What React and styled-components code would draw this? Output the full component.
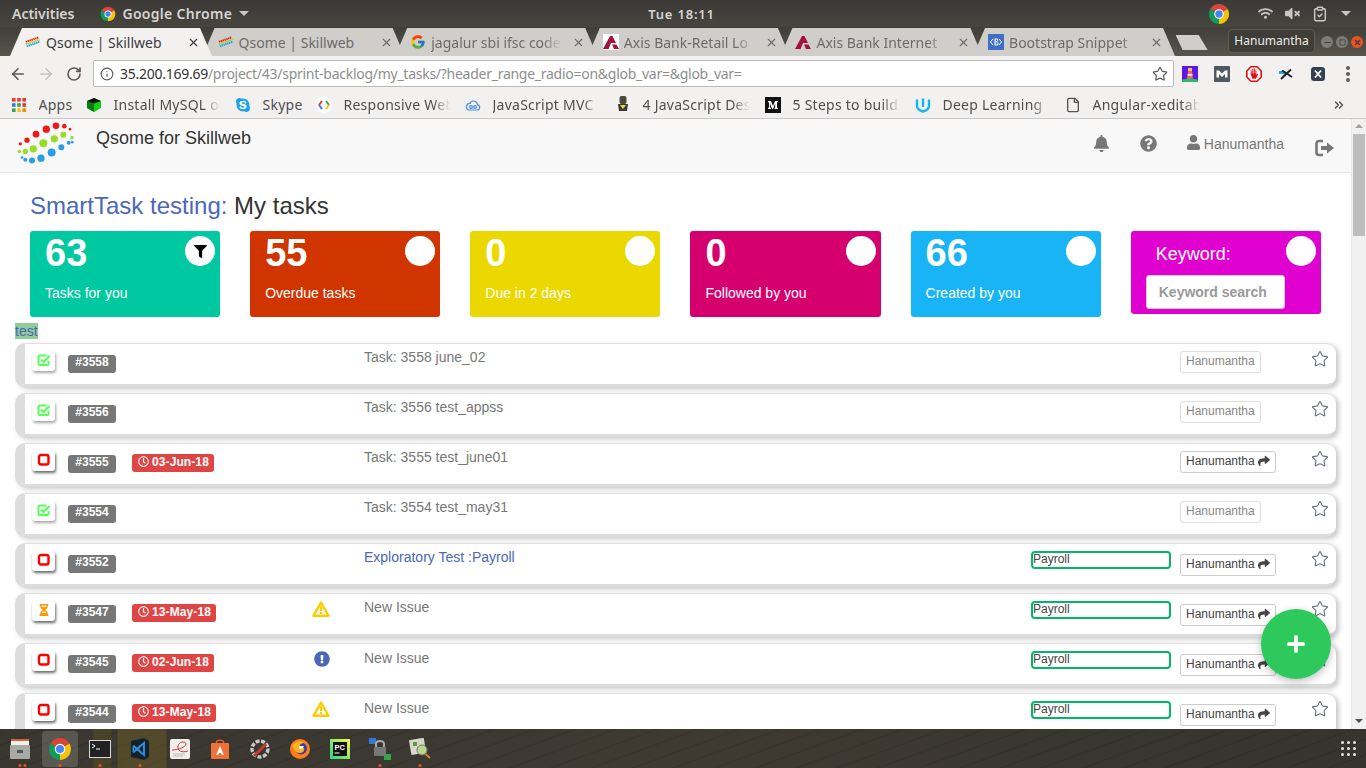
import React from 'react';
import styled, { createGlobalStyle } from 'styled-components';
import { ArrowLeft, ArrowRight, RotateCw, Info, Star, X, Minus, Square, ClipboardCheck, ChevronsRight, File } from 'lucide-react';
import { FaBell, FaQuestionCircle, FaUser, FaFilter, FaPlus, FaShare, FaRegClock, FaSkype, FaExclamationCircle, FaHourglassHalf, FaWifi, FaVolumeMute } from 'react-icons/fa';
import { FcGoogle } from 'react-icons/fc';

const UI = '"Noto Sans", "Open Sans", sans-serif';
const WEB = '"Liberation Sans", Arial, sans-serif';

const GlobalStyle = createGlobalStyle`
  html, body { margin: 0; padding: 0; height: 100%; overflow: hidden; }
  * { box-sizing: border-box; }
`;

const Screen = styled.div`
  width: 1366px;
  height: 768px;
  display: flex;
  flex-direction: column;
  overflow: hidden;
  font-family: ${WEB};
`;

/* ---- gnome top bar ---- */
const TopBar = styled.div`
  height: 27px;
  background: linear-gradient(#3a3935, #46453f);
  color: #d6d4cf;
  font: 600 14px ${UI};
  display: grid;
  grid-template-columns: 1fr auto 1fr;
  align-items: center;
  padding: 0 15px 0 12px;
`;
const TopLeft = styled.div`
  display: flex;
  align-items: center;
  gap: 26px;
`;
const AppName = styled.div`
  display: flex;
  align-items: center;
  gap: 6px;
  letter-spacing: 0.3px;
`;
const Caret = styled.span`
  width: 0;
  height: 0;
  margin-left: 1px;
  border-left: 5px solid transparent;
  border-right: 5px solid transparent;
  border-top: 5px solid #c9c7c2;
`;
const Clock = styled.div`
  font-size: 13px;
  letter-spacing: 0.8px;
`;
const Tray = styled.div`
  display: flex;
  align-items: center;
  justify-content: flex-end;
  gap: 12px;
  color: #c9c7c2;
`;
const TrayChrome = styled.div`
  display: flex;
  margin-right: 16px;
`;

/* ---- chrome tabs ---- */
const TabStrip = styled.div`
  height: 29px;
  background: linear-gradient(#3f3e38, #57554d);
  display: flex;
  align-items: flex-end;
  padding-left: 10px;
`;
const Tab = styled.div`
  position: relative;
  z-index: ${p => (p.$active ? 2 : 1)};
  width: 202px;
  height: 28px;
  margin-right: -9.4px;
  padding: 0 12px 0 15px;
  display: flex;
  align-items: center;
  gap: 5px;
  background: ${p => (p.$active ? '#f2f1f0' : '#cfcecb')};
  color: ${p => (p.$active ? '#3c3c3c' : '#6c6b69')};
  font: 14px ${UI};
  white-space: nowrap;
  clip-path: polygon(12px 0, calc(100% - 12px) 0, 100% 100%, 0 100%);
`;
const TabTitle = styled.span`
  flex: 1;
  overflow: hidden;
  ${p => p.$fade && 'mask-image: linear-gradient(90deg, #000 82%, transparent 96%);'}
`;
const NewTab = styled.div`
  width: 32px;
  height: 15px;
  margin: 0 0 6px 10px;
  background: #cfcecb;
  clip-path: polygon(0 0, 72% 0, 100% 100%, 22% 100%);
`;
const Profile = styled.div`
  margin: 0 6px 3px auto;
  width: 87px;
  height: 24px;
  border: 1px solid #5f5d55;
  border-radius: 4px;
  background: #3e3d37;
  color: #ececea;
  font: 12px/22px ${UI};
  text-align: center;
`;
const WinButtons = styled.div`
  display: flex;
  gap: 3px;
  margin: 0 3px 8px 0;
`;
const WinButton = styled.span`
  width: 12px;
  height: 12px;
  border-radius: 50%;
  background: ${p => (p.$close ? '#e9541f' : '#7d7c75')};
  color: #3c3b36;
  display: flex;
  align-items: center;
  justify-content: center;
`;

/* ---- chrome toolbar ---- */
const Toolbar = styled.div`
  height: 35px;
  background: #f2f1f0;
  display: flex;
  align-items: center;
  padding-left: 4px;
`;
const NavButton = styled.div`
  width: 28px;
  display: flex;
  justify-content: center;
  color: ${p => (p.$off ? '#c4c4c4' : '#5a5a5a')};
`;
const Omnibox = styled.div`
  width: 1081px;
  height: 27px;
  margin-left: 5px;
  background: #fff;
  border: 1px solid #b9b9b9;
  border-radius: 2px;
  display: flex;
  align-items: center;
  gap: 6px;
  padding: 0 5px 0 6px;
  color: #5f5f5f;
`;
const Url = styled.div`
  flex: 1;
  font: 14px ${UI};
  letter-spacing: -0.265px;
  color: #8e8e8e;
  white-space: nowrap;
  b {
    font-weight: 400;
    color: #333;
  }
`;
const Extensions = styled.div`
  flex: 1;
  display: flex;
  align-items: center;
  gap: 16px;
  padding-left: 8px;
`;
const MenuDots = styled.div`
  display: grid;
  gap: 2px;
  margin-left: 4px;
  span {
    width: 4px;
    height: 4px;
    border-radius: 50%;
    background: #5f5f5f;
  }
`;

/* ---- bookmarks ---- */
const Bookmarks = styled.div`
  height: 28px;
  background: #f2f1f0;
  border-bottom: 1px solid #c9c9c9;
  display: flex;
  align-items: center;
  gap: 13px;
  padding: 0 20px 0 11px;
  font: 14px ${UI};
  letter-spacing: 0.25px;
  color: #4f4f4f;
`;
const Bookmark = styled.div`
  display: flex;
  align-items: center;
  gap: 11.5px;
`;
const BookmarkLabel = styled.span`
  width: ${p => p.$w}px;
  overflow: hidden;
  white-space: nowrap;
  ${p => p.$fade && 'mask-image: linear-gradient(90deg, #000 82%, transparent 98%);'}
`;
const BookmarkIcon = styled.span`
  width: 16px;
  height: 16px;
  display: flex;
  align-items: center;
  justify-content: center;
`;
const More = styled.div`
  margin-left: auto;
  display: flex;
`;

/* ---- page ---- */
const Page = styled.div`
  position: relative;
  height: 610px;
  display: flex;
  background: #fff;
  overflow: hidden;
`;
const Main = styled.div`
  flex: 1;
  min-width: 0;
  overflow: hidden;
`;
const NavBar = styled.div`
  height: 54px;
  background: #f8f8f8;
  border-bottom: 1px solid #e7e7e7;
  display: flex;
  padding: 0 16px;
`;
const Brand = styled.div`
  font-size: 18px;
  line-height: 20px;
  color: #333;
  margin: 9px 0 0 20px;
`;
const NavLogo = styled.svg`
  margin-top: 3px;
`;
const NavRight = styled.div`
  margin-left: auto;
  display: flex;
  align-items: flex-start;
  color: #777;
  padding-top: 16px;
`;
const NavIcon = styled.span`
  display: flex;
  margin-right: ${p => p.$mr}px;
`;
const UserName = styled.span`
  font-size: 14px;
  line-height: 18px;
  margin: 0 31px 0 3px;
`;
const Logout = styled.svg`
  margin-top: 4px;
`;
const Heading = styled.h1`
  margin: 0;
  padding: 19px 30px 0;
  height: 58px;
  font-size: 24px;
  font-weight: 400;
  line-height: 28px;
  color: #333;
  span {
    color: #4a67b8;
  }
`;
const Cards = styled.div`
  display: grid;
  grid-template-columns: repeat(6, 1fr);
  gap: 30px;
  padding: 0 30.1px 0 30px;
  align-items: start;
`;
const Card = styled.div`
  position: relative;
  height: ${p => (p.$short ? 83 : 86)}px;
  background: ${p => p.$bg};
  border-radius: 3px;
  color: #fff;
  padding: 0 15px;
`;
const CardNumber = styled.div`
  font-size: 38px;
  font-weight: 700;
  line-height: 44px;
`;
const CardLabel = styled.div`
  font-size: 14px;
  line-height: 20px;
  margin-top: 8px;
`;
const CardCircle = styled.span`
  position: absolute;
  top: 5px;
  right: 5px;
  width: 30px;
  height: 30px;
  border-radius: 50%;
  background: #fff;
  color: #000;
  display: flex;
  align-items: center;
  justify-content: center;
`;
const KeywordLabel = styled.div`
  font-size: 18px;
  line-height: 20px;
  padding: 13px 0 0 10px;
`;
const KeywordInput = styled.input`
  display: block;
  width: 139px;
  height: 34px;
  margin-top: 11px;
  padding: 0 12px;
  border: 1px solid #ccc;
  border-radius: 3px;
  font: 700 14px ${WEB};
  &::placeholder {
    color: #999;
    opacity: 1;
  }
`;
const TestLine = styled.div`
  padding: 6px 0 0 15px;
  height: 26px;
  font-size: 14px;
  line-height: 16px;
  color: #4a67b8;
  span {
    background: #90cc98;
  }
`;
const TaskList = styled.div`
  display: flex;
  flex-direction: column;
  gap: 6px;
  padding: 0 15px 0 15px;
`;
const Row = styled.div`
  height: 44px;
  flex: none;
  background: #fff;
  border-left: 10px solid #ddd;
  border-top: 1px solid #e0e0e0;
  border-bottom: 3px solid #dcdcdc;
  border-radius: 10px;
  box-shadow: 3px 2px 5px rgba(0, 0, 0, 0.22);
  display: grid;
  grid-template-columns: 36px 64px 180px 52px 667px 149px 131px 1fr;
  align-items: start;
  padding-left: 7px;
  font-size: 14px;
`;
const CheckBox = styled.div`
  width: 23px;
  height: 20px;
  margin-top: 7px;
  padding-bottom: 2px;
  background: #fff;
  border-radius: 3px;
  box-shadow: 1px 2px 3px ${p => (p.$done ? 'rgba(0,0,0,.35)' : 'rgba(0,0,0,.6)')};
  display: flex;
  align-items: center;
  justify-content: center;
`;
const IdBadge = styled.div`
  width: 48px;
  height: 18px;
  margin-top: 11px;
  background: #777;
  color: #fff;
  border-radius: 3px;
  font-size: 12px;
  font-weight: 700;
  line-height: 15px;
  text-align: center;
`;
const DateBadge = styled.div`
  justify-self: start;
  height: 18px;
  margin-top: 10px;
  padding: 0 5px 3px 6px;
  display: flex;
  align-items: center;
  gap: 3px;
  background: #df4545;
  color: #fff;
  border-radius: 3px;
  font-size: 12px;
  font-weight: 700;
  letter-spacing: 0.1px;
`;
const Priority = styled.div`
  display: flex;
  margin-top: ${p => p.$top}px;
  margin-left: ${p => p.$left}px;
`;
const TaskTitle = styled.div`
  margin-top: ${p => (p.$low ? 6 : 5)}px;
  line-height: 16px;
  color: ${p => (p.$link ? '#4a67b8' : '#777')};
`;
const Tag = styled.div`
  width: 140px;
  height: 18px;
  margin-top: 7px;
  border: 2px solid #00b765;
  border-radius: 4px;
  font-size: 12px;
  line-height: 12px;
  color: #444;
`;
const Assignee = styled.div`
  justify-self: start;
  height: 22px;
  margin-top: ${p => (p.$pushed ? 10 : 7)}px;
  padding: 0 5px 2px;
  display: flex;
  align-items: center;
  gap: 3px;
  border: 1px solid ${p => (p.$muted ? '#ddd' : '#ccc')};
  border-radius: 3px;
  font-size: 12px;
  color: ${p => (p.$muted ? '#888' : '#444')};
`;
const StarCell = styled.div`
  display: flex;
  margin-top: 6px;
`;
const Fab = styled.div`
  position: absolute;
  right: 35px;
  top: 490px;
  width: 70px;
  height: 70px;
  border-radius: 50%;
  background: #2ec95c;
  color: #fff;
  box-shadow: 0 3px 8px rgba(0, 0, 0, 0.25);
  display: flex;
  align-items: center;
  justify-content: center;
`;
const ScrollBar = styled.div`
  width: 15px;
  background: #f1f1f1;
  border-left: 1px solid #e8e8e8;
  display: flex;
  flex-direction: column;
  align-items: center;
`;
const ScrollArrow = styled.span`
  width: 0;
  height: 0;
  margin: ${p => (p.$down ? 'auto 0 6px' : '5px 0 0')};
  border-left: 4px solid transparent;
  border-right: 4px solid transparent;
  ${p => (p.$down ? 'border-top: 4px solid #505050;' : 'border-bottom: 4px solid #a3a3a3;')}
`;
const ScrollThumb = styled.span`
  width: 12px;
  height: 102px;
  margin-top: 6px;
  background: #bdbdbd;
`;

/* ---- dock ---- */
const Dock = styled.div`
  height: 39px;
  display: flex;
  align-items: center;
  padding: 0 10px 0 2px;
  background:
    linear-gradient(90deg, transparent 93px, rgba(96, 84, 30, 0.4) 94px, rgba(96, 84, 30, 0.4) 111px, transparent 112px,
      transparent 117px, rgba(110, 96, 34, 0.45) 118px, rgba(110, 96, 34, 0.45) 166px, transparent 167px),
    repeating-linear-gradient(160deg, rgba(0, 0, 0, 0.08) 0 2px, transparent 2px 14px),
    linear-gradient(100deg, #3a3731, #3e3a32 50%, #37342d);
`;
const DockItem = styled.div`
  position: relative;
  width: 36px;
  height: 36px;
  margin-right: 4px;
  border-radius: 4px;
  background: ${p => (p.$active ? 'rgba(255,255,255,.16)' : 'transparent')};
  display: flex;
  align-items: center;
  justify-content: center;
  &::after {
    content: '';
    display: ${p => (p.$dots ? 'block' : 'none')};
    position: absolute;
    bottom: 0;
    left: 50%;
    transform: translateX(-50%);
    width: 3px;
    height: 3px;
    border-radius: 50%;
    background: #e9541f;
    box-shadow: ${p => (p.$dots > 1 ? '5px 0 0 #e9541f' : 'none')};
  }
`;
const AppGrid = styled.div`
  margin-left: auto;
  display: grid;
  grid-template-columns: repeat(3, 3px);
  gap: 3px;
  span {
    width: 3px;
    height: 3px;
    border-radius: 50%;
    background: #e8e8e8;
  }
`;

/* ---- drawings ---- */
const ChromeLogo = ({ size }) => (
  <svg width={size} height={size} viewBox="0 0 48 48">
    <path d="M24 24L5 13A22 22 0 0 1 43 13Z" fill="#db4437" />
    <path d="M24 24L43 13A22 22 0 0 1 24 46Z" fill="#f4c20d" />
    <path d="M24 24L24 46A22 22 0 0 1 5 13Z" fill="#0f9d58" />
    <circle cx="24" cy="24" r="10.5" fill="#fff" />
    <circle cx="24" cy="24" r="8" fill="#4285f4" />
  </svg>
);

const QsomeLogo = ({ width, height }) => {
  const dots = [
    ['#f01818', [[63, 77, 5], [83, 66, 8], [110, 48, 10], [141, 33, 11], [170, 23, 10], [195, 24, 7], [212, 33, 4]]],
    ['#96dc28', [[60, 100, 5], [78, 100, 8], [102, 92, 11], [132, 75, 12], [165, 62, 11], [192, 50, 9], [218, 58, 5]]],
    ['#2a9ee4', [[68, 118, 4], [78, 125, 6], [98, 127, 9], [125, 120, 11], [157, 103, 12], [186, 87, 9], [208, 74, 6], [219, 72, 4]]],
  ];
  return (
    <NavLogo width={width} height={height} viewBox="50 12 180 128">
      {dots.map(([color, list]) =>
        list.map(([cx, cy, r]) => <circle key={color + cx} cx={cx} cy={cy} r={r} fill={color} />)
      )}
    </NavLogo>
  );
};

const AxisLogo = ({ boxed }) => (
  <svg width="16" height="16" viewBox="0 0 16 16">
    {boxed && <rect width="16" height="16" fill="#fff" />}
    <path d="M0 15L7 2H9.5L13 9H8L5.5 15ZM9 10.5H13.5L16 15H11Z" fill="#a6123f" />
  </svg>
);

const BootstrapLogo = () => (
  <svg width="16" height="16" viewBox="0 0 16 16">
    <rect width="16" height="16" fill="#3f6fc4" />
    <path d="M5 5L2.5 8L5 11M11 5L13.5 8L11 11" stroke="#fff" fill="none" />
    <path d="M6.5 4.5H9C10.5 4.5 10.5 7.5 9 7.7C11 7.8 11 11.5 9 11.5H6.5ZM7.6 5.5V7.3H8.8C9.5 7.3 9.5 5.5 8.8 5.5ZM7.6 8.2V10.6H8.9C9.8 10.6 9.8 8.2 8.9 8.2Z" fill="#fff" />
  </svg>
);

const Lighthouse = () => (
  <svg width="16" height="16" viewBox="0 0 16 16">
    <rect width="16" height="16" fill="#5c18e8" />
    <path d="M6 5H10L11 13H5Z" fill="#f0695a" />
    <rect x="6" y="2" width="4" height="3" fill="#f6c343" />
    <rect x="5.6" y="8" width="4.8" height="1.6" fill="#fff" />
    <path d="M0 16V14C4 12 12 12 16 14V16Z" fill="#2fb866" />
  </svg>
);

const MercuryLogo = () => (
  <svg width="16" height="16" viewBox="0 0 16 16">
    <rect width="16" height="16" rx="1" fill="#4f5a60" />
    <path d="M2.5 11.5V4.5H5L8 7.5L11 4.5H13.5V11.5H11V8L8 11L5 8V11.5Z" fill="#fff" />
  </svg>
);

const StopHand = () => (
  <svg width="16" height="16" viewBox="0 0 16 16">
    <path d="M5 .8H11L15.2 5V11L11 15.2H5L.8 11V5Z" fill="#fff" stroke="#e01010" strokeWidth="1.6" />
    <path d="M4.6 8V4.5H5.6V7.5H6.2V3H7.2V7.5H7.8V2.6H8.8V7.5H9.4V3.6H10.4V9L11.6 7.6L12.2 8.2L10 12.8H6.4Z" fill="#e01010" />
  </svg>
);

const CrossArrow = () => (
  <svg width="16" height="16" viewBox="0 0 16 16">
    <path d="M1 5H7L9 7.5L6 11H4L6 8H1Z" fill="#2aa7e8" />
    <path d="M3 13L13 3.5M4 4.5L14 11" stroke="#20262c" strokeWidth="2" />
  </svg>
);

const DarkX = () => (
  <svg width="16" height="16" viewBox="0 0 16 16">
    <rect x="1" y="1" width="14" height="14" rx="3" fill="#33414f" />
    <path d="M5 4.5L11 11.5M11 4.5L5 11.5" stroke="#fff" strokeWidth="1.8" />
  </svg>
);

const AppsDots = () => (
  <svg width="14" height="14" viewBox="0 0 14 14">
    {['#e53935', '#e53935', '#e53935', '#3b78e7', '#43a047', '#e53935', '#43a047', '#fbc02d', '#fb8c00'].map((c, i) => (
      <rect key={i} x={(i % 3) * 5.2} y={Math.floor(i / 3) * 5.2} width="3.6" height="3.6" fill={c} />
    ))}
  </svg>
);

const GreenCube = () => (
  <svg width="16" height="16" viewBox="0 0 16 16">
    <path d="M1 4L8 1L15 4V11L8 15L1 11Z" fill="#0fd40f" />
    <path d="M1 4L8 6.5V15L1 11Z" fill="#0a7a12" />
    <path d="M1 4L8 1L15 4L8 6.5Z" fill="#111" />
  </svg>
);

const Responsive = () => (
  <svg width="16" height="16" viewBox="0 0 16 16">
    <circle cx="8" cy="8" r="8" fill="#fff" />
    <path d="M6 4L3 8" stroke="#e53935" strokeWidth="2" />
    <path d="M3 8L6 12" stroke="#3b78e7" strokeWidth="2" />
    <path d="M10 4L13 8" stroke="#43a047" strokeWidth="2" />
    <path d="M13 8L10 12" stroke="#fbc02d" strokeWidth="2" />
  </svg>
);

const CloudLink = () => (
  <svg width="16" height="16" viewBox="0 0 16 16" fill="none" stroke="#4a90e2" strokeWidth="1.2">
    <path d="M4 13H12C15.5 13 15.5 8 12.5 7.8C12 3 6 3 5 6.5C1 6 0 13 4 13Z" />
    <circle cx="6" cy="10" r="1.4" />
    <circle cx="10" cy="10" r="1.4" />
  </svg>
);

const Robot = () => (
  <svg width="16" height="18" viewBox="0 0 16 18">
    <rect x="4.5" y="0" width="7" height="8" rx="2" fill="#4a4a3a" />
    <path d="M3 8H13L12 15H4Z" fill="#3a3a30" />
    <path d="M5 9H11L8 13Z" fill="#e8d44d" />
  </svg>
);

const Medium = () => (
  <svg width="16" height="16" viewBox="0 0 16 16">
    <rect width="16" height="16" fill="#111" />
    <path d="M3 4H6L8 9L10 4H13V5L12 5.5V10.5L13 11V12H9.5V11L10.2 10.5V6.5L8 12H7.2L5 6.5V10.5L6 11V12H3V11L4 10.5V5.5L3 5Z" fill="#fff" />
  </svg>
);

const Udacity = () => (
  <svg width="16" height="16" viewBox="0 0 16 16" fill="none" stroke="#18b5e8" strokeWidth="2.4">
    <path d="M2 2.5V9C2 11.5 4.5 13.5 8 14.5C11.5 13.5 14 11.5 14 9V2.5" />
    <path d="M8 1.5V10" />
  </svg>
);

const Warning = () => (
  <svg width="18" height="16" viewBox="0 0 18 16">
    <path d="M9 1.5L16.5 14.8H1.5Z" fill="#fff" stroke="#ffcc00" strokeWidth="2.4" strokeLinejoin="round" />
    <rect x="7.8" y="5.5" width="2.4" height="4.5" fill="#ffcc00" />
    <rect x="7.8" y="11" width="2.4" height="2" fill="#ffcc00" />
  </svg>
);

const OpenSquare = () => (
  <svg width="14" height="14" viewBox="0 0 14 14">
    <rect x="2" y="2" width="9.5" height="9.5" rx="2" fill="none" stroke="#ff0000" strokeWidth="2.4" />
  </svg>
);

const DoneCheck = () => (
  <svg width="14" height="14" viewBox="0 0 14 14" fill="none" stroke="#55ff55" strokeWidth="2">
    <path d="M11.5 8V10.5C11.5 11.5 11 12 10 12H3C2 12 1.5 11.5 1.5 10.5V4C1.5 3 2 2.5 3 2.5H9.5" />
    <path d="M4 6.5L6.5 9L12.5 3" strokeWidth="2.2" />
  </svg>
);

const LogoutIcon = () => (
  <Logout width="20" height="18" viewBox="0 0 20 18">
    <path d="M8 2H4C2.5 2 1.5 3 1.5 4.5V13.5C1.5 15 2.5 16 4 16H8" fill="none" stroke="#777" strokeWidth="2.6" />
    <path d="M6 7H12V3.5L19 9L12 14.5V11H6Z" fill="#777" />
  </Logout>
);

const Drawer = () => (
  <svg width="20" height="22" viewBox="0 0 20 22">
    <rect x="1" y="1" width="18" height="6" fill="#d9603a" />
    <rect x="1" y="3" width="18" height="4" fill="#f0f0ee" />
    <rect x="0" y="7" width="20" height="14" rx="1" fill="#a9a9a6" />
    <rect x="7" y="12" width="6" height="3" fill="#555" />
  </svg>
);
const Terminal = () => (
  <svg width="22" height="18" viewBox="0 0 22 18">
    <rect x="0.5" y="0.5" width="21" height="17" fill="#222" stroke="#d8d8d8" />
    <path d="M3 4L6 6L3 8" stroke="#fff" fill="none" />
    <path d="M7 9H11" stroke="#fff" />
  </svg>
);
const VsCode = () => (
  <svg width="20" height="22" viewBox="0 0 20 22">
    <path d="M1 3L14 0L19 3V19L14 22L1 19Z" fill="#14202c" />
    <path d="M15 3V19L7 12.5L4 15L2.5 14V8L4 7L7 9.5ZM13 7L9 11L13 15ZM4 9.5V12.5L5.5 11Z" fill="#2b8ed8" />
  </svg>
);
const Note = () => (
  <svg width="20" height="20" viewBox="0 0 20 20">
    <rect width="20" height="20" rx="2" fill="#f0efec" />
    <path d="M2 11C8 11 16 8 16 5C16 2 9 2 8 7C7 12 12 14 18 12" fill="none" stroke="#d43a3a" />
    <path d="M3 15H15M3 17H13" stroke="#bbb" />
  </svg>
);
const Store = () => (
  <svg width="18" height="20" viewBox="0 0 18 20">
    <path d="M5.5 5V3C5.5 0.5 12.5 0.5 12.5 3V5" fill="none" stroke="#e2622f" strokeWidth="1.5" />
    <rect y="4" width="18" height="16" rx="1" fill="#ef7038" />
    <path d="M9 7L13 16H11L10 14H8L7 16H5Z" fill="#fff" />
  </svg>
);
const Wrench = () => (
  <svg width="20" height="20" viewBox="0 0 20 20">
    <circle cx="10" cy="10" r="8" fill="none" stroke="#c9c9c6" strokeWidth="3.4" strokeDasharray="4 1.5" />
    <path d="M4 17L16 5" stroke="#c23a2c" strokeWidth="3" />
  </svg>
);
const Firefox = () => (
  <svg width="20" height="20" viewBox="0 0 20 20">
    <circle cx="10" cy="10" r="10" fill="#ff7d1a" />
    <circle cx="11" cy="9.5" r="6" fill="#3a3fa8" />
    <path d="M2 7C5 2 11 1 15 4C11 4 9 6 10 8C13 7 16 10 13 13C10 15 5 14 4 10Z" fill="#ffb21a" />
    <path d="M9 7H14L12 10H9Z" fill="#fff" />
  </svg>
);
const PyCharm = () => (
  <svg width="20" height="20" viewBox="0 0 20 20">
    <defs>
      <linearGradient id="pc" x1="0" y1="1" x2="1" y2="0">
        <stop offset="0" stopColor="#21d789" />
        <stop offset="1" stopColor="#fcf84a" />
      </linearGradient>
    </defs>
    <rect width="20" height="20" fill="url(#pc)" />
    <rect x="3" y="3" width="14" height="14" fill="#111" />
    <text x="4.5" y="11" fontSize="7.5" fontWeight="700" fill="#fff" fontFamily={WEB}>PC</text>
    <rect x="4.5" y="13.5" width="5" height="1" fill="#fff" />
  </svg>
);
const Vpn = () => (
  <svg width="22" height="24" viewBox="0 0 22 24">
    <path d="M0 1H7V7H0Z" fill="#2a7bd6" />
    <path d="M15 17H22V23H15Z" fill="#2aa84a" />
    <path d="M7 10V7C7 3 15 3 15 7V10" fill="none" stroke="#aaa" strokeWidth="2" />
    <rect x="5" y="10" width="12" height="9" rx="1" fill="#777" />
  </svg>
);
const Magnifier = () => (
  <svg width="22" height="22" viewBox="0 0 22 22">
    <rect x="1" y="1" width="15" height="15" transform="rotate(-10 8 8)" fill="#d8d8c8" />
    <circle cx="13" cy="12" r="5" fill="#b9d88c" stroke="#777" />
    <path d="M16.5 16L21 20" stroke="#c9803a" strokeWidth="2" />
    <rect x="4" y="4" width="4" height="4" fill="#5a9a4a" />
  </svg>
);

const QsomeFavicon = () => (
  <svg width="16" height="16" viewBox="50 12 180 128">
    <g strokeDasharray="16 6" strokeWidth="22" fill="none">
      <path d="M60 75L200 25" stroke="#f01818" />
      <path d="M60 100L215 50" stroke="#96dc28" />
      <path d="M70 125L218 72" stroke="#2a9ee4" />
    </g>
  </svg>
);

/* ---- data ---- */
const tabs = [
  { title: 'Qsome | Skillweb', icon: <QsomeFavicon />, active: true },
  { title: 'Qsome | Skillweb', icon: <QsomeFavicon /> },
  { title: 'jagalur sbi ifsc code', icon: <FcGoogle size={16} />, fade: true },
  { title: 'Axis Bank-Retail Lo', icon: <AxisLogo boxed />, fade: true },
  { title: 'Axis Bank Internet', icon: <AxisLogo />, fade: true },
  { title: 'Bootstrap Snippet', icon: <BootstrapLogo />, fade: true },
];

const bookmarks = [
  { icon: <AppsDots />, label: 'Apps', w: 34.5 },
  { icon: <GreenCube />, label: 'Install MySQL o', w: 108.5, fade: true },
  { icon: <FaSkype size={16} color="#1aa3e8" />, label: 'Skype', w: 40.5 },
  { icon: <Responsive />, label: 'Responsive Web', w: 108.5, fade: true },
  { icon: <CloudLink />, label: 'JavaScript MVC', w: 109.5, fade: true },
  { icon: <Robot />, label: '4 JavaScript Des', w: 109.5, fade: true },
  { icon: <Medium />, label: '5 Steps to build', w: 109.5, fade: true },
  { icon: <Udacity />, label: 'Deep Learning |', w: 109.5, fade: true },
  { icon: <File size={16} color="#555" />, label: 'Angular-xeditab', w: 109, fade: true },
];

const cards = [
  { number: '63', label: 'Tasks for you', bg: '#00c8a0', filter: true },
  { number: '55', label: 'Overdue tasks', bg: '#d03500' },
  { number: '0', label: 'Due in 2 days', bg: '#ebd800' },
  { number: '0', label: 'Followed by you', bg: '#d5006d' },
  { number: '66', label: 'Created by you', bg: '#18b4f5' },
];

const tasks = [
  { id: '#3558', status: 'done', title: 'Task: 3558 june_02', muted: true },
  { id: '#3556', status: 'done', title: 'Task: 3556 test_appss', muted: true },
  { id: '#3555', status: 'open', date: '03-Jun-18', title: 'Task: 3555 test_june01' },
  { id: '#3554', status: 'done', title: 'Task: 3554 test_may31', muted: true },
  { id: '#3552', status: 'open', title: 'Exploratory Test :Payroll', link: true, tag: 'Payroll' },
  { id: '#3547', status: 'wait', date: '13-May-18', prio: 'warn', title: 'New Issue', tag: 'Payroll' },
  { id: '#3545', status: 'open', date: '02-Jun-18', prio: 'info', title: 'New Issue', tag: 'Payroll', low: true },
  { id: '#3544', status: 'open', date: '13-May-18', prio: 'warn', title: 'New Issue', tag: 'Payroll', low: true },
];

const dockApps = [
  { icon: <Drawer />, dots: 2 },
  { icon: <ChromeLogo size={24} />, dots: 1, active: true },
  { icon: <Terminal />, dots: 1 },
  { icon: <VsCode />, dots: 1 },
  { icon: <Note /> },
  { icon: <Store /> },
  { icon: <Wrench /> },
  { icon: <Firefox /> },
  { icon: <PyCharm /> },
  { icon: <Vpn />, dots: 1 },
  { icon: <Magnifier />, dots: 1 },
];

const statusIcon = {
  done: <DoneCheck />,
  open: <OpenSquare />,
  wait: <FaHourglassHalf size={12} color="#ff9800" />,
};

const TaskRow = ({ task }) => (
  <Row>
    <CheckBox $done={task.status === 'done'}>{statusIcon[task.status]}</CheckBox>
    <IdBadge>{task.id}</IdBadge>
    {task.date ? (
      <DateBadge>
        <FaRegClock size={11} />
        {task.date}
      </DateBadge>
    ) : (
      <span />
    )}
    {task.prio === 'warn' && (
      <Priority $top={7} $left={0}>
        <Warning />
      </Priority>
    )}
    {task.prio === 'info' && (
      <Priority $top={7} $left={2}>
        <FaExclamationCircle size={16} color="#4a67b8" />
      </Priority>
    )}
    {!task.prio && <span />}
    <TaskTitle $link={task.link} $low={task.low}>{task.title}</TaskTitle>
    {task.tag ? <Tag>{task.tag}</Tag> : <span />}
    <Assignee $muted={task.muted} $pushed={!!task.tag}>
      Hanumantha
      {!task.muted && <FaShare size={12} color="#444" />}
    </Assignee>
    <StarCell>
      <Star size={18} color="#6d7380" strokeWidth={1.5} />
    </StarCell>
  </Row>
);

const App = () => (
  <Screen>
    <GlobalStyle />
    <TopBar>
      <TopLeft>
        <span>Activities</span>
        <AppName>
          <ChromeLogo size={16} />
          Google Chrome
          <Caret />
        </AppName>
      </TopLeft>
      <Clock>Tue 18:11</Clock>
      <Tray>
        <TrayChrome>
          <ChromeLogo size={22} />
        </TrayChrome>
        <FaWifi size={15} />
        <FaVolumeMute size={15} />
        <ClipboardCheck size={16} strokeWidth={2.2} />
        <Caret />
      </Tray>
    </TopBar>

    <TabStrip>
      {tabs.map((tab, i) => (
        <Tab key={i} $active={tab.active}>
          {tab.icon}
          <TabTitle $fade={tab.fade}>{tab.title}</TabTitle>
          <X size={13} strokeWidth={2} />
        </Tab>
      ))}
      <NewTab />
      <Profile>Hanumantha</Profile>
      <WinButtons>
        <WinButton>
          <Minus size={9} strokeWidth={3} />
        </WinButton>
        <WinButton>
          <Square size={7} strokeWidth={2.5} />
        </WinButton>
        <WinButton $close>
          <X size={9} strokeWidth={3} />
        </WinButton>
      </WinButtons>
    </TabStrip>

    <Toolbar>
      <NavButton>
        <ArrowLeft size={18} strokeWidth={2.2} />
      </NavButton>
      <NavButton $off>
        <ArrowRight size={18} strokeWidth={2.2} />
      </NavButton>
      <NavButton>
        <RotateCw size={16} strokeWidth={2.4} />
      </NavButton>
      <Omnibox>
        <Info size={14} />
        <Url>
          <b>35.200.169.69</b>/project/43/sprint-backlog/my_tasks/?header_range_radio=on&amp;glob_var=&amp;glob_var=
        </Url>
        <Star size={16} strokeWidth={1.8} />
      </Omnibox>
      <Extensions>
        <Lighthouse />
        <MercuryLogo />
        <StopHand />
        <CrossArrow />
        <DarkX />
        <MenuDots>
          <span />
          <span />
          <span />
        </MenuDots>
      </Extensions>
    </Toolbar>

    <Bookmarks>
      {bookmarks.map(b => (
        <Bookmark key={b.label}>
          <BookmarkIcon>{b.icon}</BookmarkIcon>
          <BookmarkLabel $w={b.w} $fade={b.fade}>
            {b.label}
          </BookmarkLabel>
        </Bookmark>
      ))}
      <More>
        <ChevronsRight size={14} strokeWidth={2.4} />
      </More>
    </Bookmarks>

    <Page>
      <Main>
        <NavBar>
          <QsomeLogo width={60} height={43} />
          <Brand>Qsome for Skillweb</Brand>
          <NavRight>
            <NavIcon $mr={30}>
              <FaBell size={17} />
            </NavIcon>
            <NavIcon $mr={29}>
              <FaQuestionCircle size={17} />
            </NavIcon>
            <NavIcon $mr={0}>
              <FaUser size={15} />
            </NavIcon>
            <UserName>Hanumantha</UserName>
            <LogoutIcon />
          </NavRight>
        </NavBar>
        <Heading>
          <span>SmartTask testing:</span> My tasks
        </Heading>
        <Cards>
          {cards.map(card => (
            <Card key={card.label} $bg={card.bg}>
              <CardNumber>{card.number}</CardNumber>
              <CardLabel>{card.label}</CardLabel>
              <CardCircle>{card.filter && <FaFilter size={13} />}</CardCircle>
            </Card>
          ))}
          <Card $bg="#e000d0" $short>
            <KeywordLabel>Keyword:</KeywordLabel>
            <KeywordInput placeholder="Keyword search" />
            <CardCircle />
          </Card>
        </Cards>
        <TestLine>
          <span>test</span>
        </TestLine>
        <TaskList>
          {tasks.map(task => (
            <TaskRow key={task.id} task={task} />
          ))}
        </TaskList>
      </Main>
      <ScrollBar>
        <ScrollArrow />
        <ScrollThumb />
        <ScrollArrow $down />
      </ScrollBar>
      <Fab>
        <FaPlus size={20} />
      </Fab>
    </Page>

    <Dock>
      {dockApps.map((app, i) => (
        <DockItem key={i} $active={app.active} $dots={app.dots}>
          {app.icon}
        </DockItem>
      ))}
      <AppGrid>
        {Array.from({ length: 9 }, (_, i) => (
          <span key={i} />
        ))}
      </AppGrid>
    </Dock>
  </Screen>
);

export default App;
